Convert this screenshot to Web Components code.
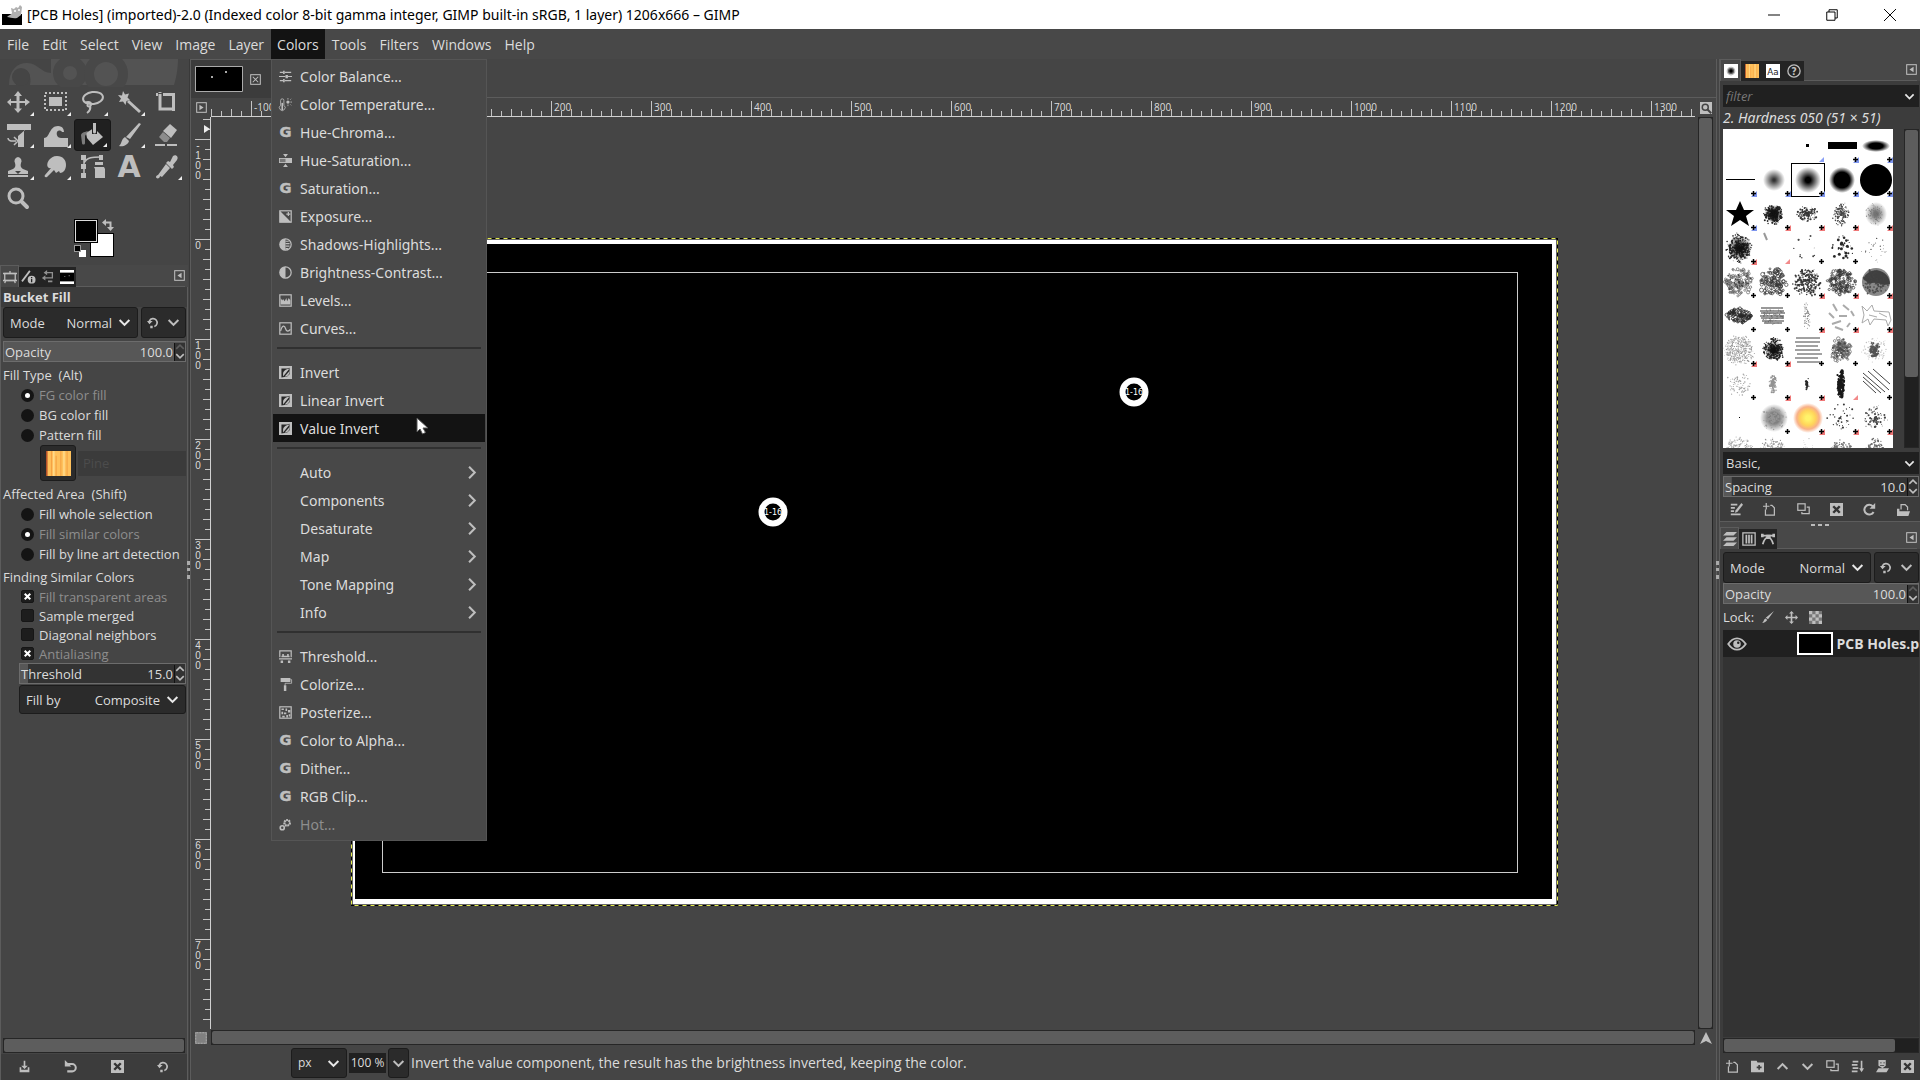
<!DOCTYPE html>
<html lang="en">
<head>
<meta charset="utf-8">
<title>[PCB Holes] (imported)-2.0 – GIMP</title>
<style>
  :root {
    --bg: #454545;
    --bar: #484848;
    --panel: #3c3c3c;
    --field: #2b2b2b;
    --dark: #202020;
    --line: #5c5c5c;
    --fg: #dcdcdc;
    --dim: #8e8e8e;
    --icon: #bebebe;
  }
  html, body { height: 100%; }
  body {
    margin: 0;
    overflow: hidden;
    background: var(--bg);
    color: var(--fg);
    font: 13px/20px "Open Sans", "Noto Sans", sans-serif;
  }
</style>
</head>
<body>
<gimp-window></gimp-window>

<script>
(function () {
  "use strict";

  const base = `
    *, *::before, *::after { box-sizing: border-box; }
    button, input, select {
      appearance: none; margin: 0; padding: 0; border: 0; border-radius: 0;
      background: none; color: inherit; font: inherit; outline: none; min-width: 0;
    }
    button { display: flex; align-items: center; justify-content: center; }
  `;

  /**
   * Registers an element whose shadow root is cloned from a template.
   * @param {string} name
   * @param {string} html
   * @param {(root: ShadowRoot, host: HTMLElement) => void} [setup]
   */
  function define(name, html, setup) {
    const template = document.createElement("template");
    template.innerHTML = `<style>${base}</style>${html}`;
    customElements.define(name, class extends HTMLElement {
      connectedCallback() {
        if (this.shadowRoot) return;
        this.attachShadow({ mode: "open" }).appendChild(template.content.cloneNode(true));
        if (setup) setup(this.shadowRoot, this);
      }
    });
  }

  // ---------- icons ----------

  const box = `<rect x="1" y="1" width="14" height="14" fill="none" stroke="currentColor" stroke-width="1.5"/>`;
  const gegl = `<text x="8" y="14" text-anchor="middle" font-family="DejaVu Sans" font-weight="bold" font-size="18" stroke="currentColor" stroke-width=".6" fill="currentColor">G</text>`;
  const invert = `<path fill="currentColor" d="M0 0h16v16H0z"/><path fill="#262626" d="M3 3h7l3-1v8l-3 3-7 1z"/><path fill="currentColor" d="M5 10c0-4 3-6 8-7l-8 10zM7 13c4 0 6-3 6-7z"/>`;

  // [viewBox size, markup]
  const icons = {
    move: [24, `<path fill="currentColor" d="M11 0l4 5h-2.500v5H18V7.500L23 11l-5 4v-3h-5.500v5.500H15L11 22l-4-4.500h2.500V12H4v3l-4-4 4-3.500V10h5.500V5H7z"/>`],
    rect: [24, `<rect x="1" y="2" width="21" height="17" fill="none" stroke="currentColor" stroke-width="2" stroke-dasharray="2 2"/><rect x="5" y="6" width="13" height="9" fill="currentColor"/>`],
    lasso: [24, `<ellipse cx="12" cy="7" rx="10" ry="6" fill="none" stroke="currentColor" stroke-width="2" transform="rotate(-8 12 7)"/><path fill="none" stroke="currentColor" stroke-width="2" d="M4 12c3-2 7-1 6 2s-5 1-3-1M9 14c1 4 0 6-3 8"/>`],
    wand: [24, `<path fill="currentColor" d="M5 0l2 3.500 4-1-1.500 4L12 9l-3.500 1-1 4L5 10.500 1 11l2-3.500L0 4l4 .5z"/><path stroke="currentColor" stroke-width="3" d="M10 10l12 11"/>`],
    crop: [24, `<path fill="none" stroke="currentColor" stroke-width="3" d="M5 3v15h12M8 3.500h10.500V20M1 3.500h2M5 1v1"/>`],
    transform: [24, `<path fill="currentColor" d="M0 1h24v6h-7v17h-6V13l7-6H0z"/><path fill="none" stroke="currentColor" stroke-width="1.500" d="M1 15c0 4 5 3 8 3M7 14l4 4-4 4"/>`],
    warp: [24, `<path fill="currentColor" d="M0 15c6 0 5-12 14-12 5 0 6 4 6 6h-2c-1-2-4-2-5 0-1 3 1 6 4 6h7v9H0z"/>`],
    bucket: [24, `<path fill="currentColor" d="M5 10l8-5 9 9-10 8-6-7z"/><path fill="#202020" d="M11 0h5v11h-5z"/><path fill="currentColor" d="M12 0h3v9a1.500 1.500 0 0 1-3 0z"/><path fill="#7c7c7c" d="M0 12c1-3 4-3 7-4l-3 5v7c0 2-3 2-3 0z"/>`],
    brush: [24, `<path fill="currentColor" d="M21 0l2 1-11 15-4-2zM7 14l4 4c-1 4-6 6-10 5 3-2 2-7 6-9z"/>`],
    eraser: [24, `<path fill="currentColor" d="M15 1l7 6-6 8-8-7z"/><path fill="#8c8c8c" d="M8 9l7 6-3 4H9l-5-5z"/><path fill="currentColor" d="M0 21h10v2H0zM12 21h10v2H12z"/>`],
    clone: [24, `<path fill="currentColor" d="M11 2a4 4 0 0 1 3 6c-1 3 0 5 2 6l5 2v3H1v-3l5-2c2-1 3-3 2-6a4 4 0 0 1 3-6zM1 20h20v2H1z"/><path fill="#454545" d="M8 16h6l-3 3z"/>`],
    smudge: [24, `<path fill="currentColor" d="M13 1c6 0 9 4 9 9s-3 8-6 8l-1-2-3 2-2-3-7 7c-2 1-3-1-2-2l6-7c-4 1-5-4-2-8 2-2 4-4 8-4z"/>`],
    path: [24, `<path fill="none" stroke="currentColor" stroke-width="1.500" d="M3 2v20M3 8C6 2 12 2 20 2"/><path fill="currentColor" d="M0 0h5v5H0zM0 9h5v5H0zM0 18h5v5H0zM18 0h4v5h-4zM14 7h8v3h-8zM13 12h10l1 2v9H14v-9z"/>`],
    text: [24, `<text x="11" y="22" text-anchor="middle" font-family="DejaVu Sans" font-weight="bold" font-size="30" fill="currentColor">A</text>`],
    picker: [24, `<path fill="currentColor" d="M18 1c3-2 6 1 4 4l-4 5 1 2-2 2-6-6 2-2 2 1zM11 9l4 4-8 9-2-1c0 3-4 3-4 1 0-1 1-2 2-2z"/>`],
    zoom: [24, `<circle cx="9" cy="9" r="7" fill="none" stroke="currentColor" stroke-width="3"/><path stroke="currentColor" stroke-width="4" stroke-linecap="round" d="M15 15l5 5"/>`],

    balance: [16, `<path stroke="currentColor" stroke-width="1.500" d="M1 3h4M7 3h8M0 8h8M11 8h5M1 13h4M7 13h8"/><path fill="currentColor" d="M5 1h2v4H5zM8 6h3v4H8zM5 11h2v4H5z"/>`],
    temperature: [16, `<path fill="none" stroke="currentColor" d="M2 9V3a2 2 0 0 1 4 0v6a3.500 3.500 0 1 1-4 0z"/><path fill="currentColor" d="M3 6h2v9H3z"/><circle cx="11" cy="5" r="2" fill="currentColor"/><path stroke="currentColor" d="M11 0v2M11 8v2M14 2l1-1M14 8l1 1M14 5h2"/>`],
    gegl: [16, gegl],
    huesat: [16, `<path fill="currentColor" d="M5 0h6L8 4zM0 5h16v6H0zM5 16h6l-3-4z"/><path fill="#777" d="M1 6h7v4H1z"/>`],
    exposure: [16, `${box}<path fill="currentColor" d="M1 1l14 14H1z"/><path stroke="currentColor" stroke-width="1.500" d="M9 5h5M11.500 2.500v5"/>`],
    shadows: [16, `<circle cx="8" cy="8" r="7" fill="none" stroke="currentColor" stroke-width="1.500"/><path fill="currentColor" d="M8 1a7 7 0 0 0 0 14z"/><path stroke="currentColor" stroke-width="1.500" d="M8 4h4M8 7h5M8 10h5M8 13h3"/>`],
    contrast: [16, `<circle cx="8" cy="8" r="7" fill="none" stroke="currentColor" stroke-width="1.500"/><path fill="currentColor" d="M8 1a7 7 0 0 0 0 14z"/>`],
    levels: [16, `${box}<path fill="currentColor" d="M2 13V5l2 3 1-2 2 3 2-4 1 4 2-4 2 3v5z"/>`],
    curves: [16, `${box}<path fill="none" stroke="currentColor" stroke-width="1.500" d="M2 11c2-8 5-7 6-3s4 4 6 1"/>`],
    invert: [16, invert],
    threshold: [16, `<path fill="none" stroke="currentColor" stroke-width="1.500" d="M1 9V1h14v8M0 11h16"/><path fill="currentColor" d="M3 7h10v2H3zM4 5h2v2H4zM10 5h2v2h-2zM2 13h3v3H2zM11 13h3v3h-3z"/>`],
    colorize: [16, `<path fill="currentColor" d="M2 0h12v5H2zM6 9h3v7H6z"/><path fill="none" stroke="currentColor" d="M14 2h1.500v4.500h-8V9"/>`],
    posterize: [16, `${box}<path fill="currentColor" d="M3 3h3v2H3zM8 3h2v3H8zM11 5h3v3h-3zM3 7h2v3H3zM6 8h3v2H6zM9 11h2v3H9zM12 10h2v3h-2zM4 12h3v2H4z"/>`],
    gears: [16, `<circle cx="10" cy="6" r="3.500" fill="none" stroke="currentColor" stroke-width="2.500" stroke-dasharray="2 1"/><circle cx="10" cy="6" r="3" fill="none" stroke="currentColor"/><circle cx="4" cy="12" r="2.500" fill="none" stroke="currentColor" stroke-width="2"/>`],

    down: [16, `<path fill="none" stroke="currentColor" stroke-width="2.500" d="M2 5l6 6 6-6"/>`],
    up: [16, `<path fill="none" stroke="currentColor" stroke-width="2.500" d="M2 11l6-6 6 6"/>`],
    right: [16, `<path fill="none" stroke="currentColor" stroke-width="2.500" d="M5 1l7 7-7 7"/>`],
    tabmenu: [16, `${box}<path fill="currentColor" d="M11 4v8L5 8z"/>`],
    cornermenu: [16, `${box}<path fill="currentColor" d="M5 4v8l6-4z"/>`],
    tabclose: [16, `${box}<path stroke="currentColor" stroke-width="1.500" d="M4 4l8 8M12 4l-8 8"/>`],
    quickzoom: [16, `<path fill="currentColor" d="M0 0h16v16H0z"/><circle cx="7" cy="7" r="4" fill="none" stroke="#444" stroke-width="2"/><path stroke="#444" stroke-width="2.500" d="M10 10l5 5"/>`],
    quickmask: [16, `<path fill="#808080" d="M0 0h16v16H0z"/><rect x="1" y="1" width="14" height="14" fill="none" stroke="#ccc" stroke-dasharray="1 1"/>`],
    nav: [16, `<path fill="currentColor" d="M8 0l8 16-8-4-8 4z"/>`],
    reset: [16, `<path fill="none" stroke="currentColor" stroke-width="2" d="M3 8V6a5 5 0 1 1 6 7"/><path fill="currentColor" d="M0 6h7l-4 4zM4 12h3v3H4z"/>`],
    resetleft: [16, `<path fill="none" stroke="currentColor" stroke-width="2.500" d="M3 5h7a4.500 4.500 0 0 1 0 9H4"/><path fill="currentColor" d="M1 0v8h8z"/>`],
    options: [16, `<rect x="2" y="4" width="12" height="8" fill="none" stroke="currentColor" stroke-width="1.500"/><path stroke="currentColor" stroke-width="1.500" d="M8 1v3M3 12l-1 3M13 12l1 3M0 4h16M0 12h16"/>`],
    device: [16, `<path stroke="currentColor" stroke-width="2" d="M0 13L9 1"/><circle cx="11" cy="11" r="4.500" fill="currentColor"/><path stroke="#222" stroke-width="1.500" d="M11 8v1M11 10v4"/>`],
    undo: [16, `<g opacity=".7"><path fill="none" stroke="currentColor" stroke-width="1.500" d="M6 3h7v6H4"/><path fill="currentColor" d="M7 0v6L3 3zM5 6v6L1 9zM8 12h5v2H8z"/></g>`],
    help: [16, `<circle cx="8" cy="8" r="7" fill="none" stroke="currentColor" stroke-width="1.500"/><text x="8" y="12" text-anchor="middle" font-family="DejaVu Sans" font-weight="bold" font-size="11" fill="currentColor">?</text>`],
    save: [16, `<path fill="currentColor" d="M7 1h2v6h3l-4 4-4-4h3zM2 9h2v3h8V9h2v6H2z"/>`],
    delete: [16, `<path fill="currentColor" d="M0 0h16v16H0z"/><path stroke="#333" stroke-width="3" d="M4 4l8 8M12 4l-8 8"/>`],
    edit: [16, `<path stroke="currentColor" stroke-width="2" d="M1 2h8M1 6h5M1 10h4M1 14h12"/><path fill="currentColor" d="M14 0l2 2-7 9-3 1 1-3z"/>`],
    new: [16, `<path fill="none" stroke="currentColor" stroke-width="1.500" d="M3 8v7h11V6l-3-3H9M0 4h8M4 0v8"/>`],
    copy: [16, `<rect x="1" y="1" width="9" height="8" fill="none" stroke="currentColor" stroke-width="1.500"/><path fill="none" stroke="currentColor" stroke-width="1.500" d="M12 5h3v8H6v-2"/>`],
    refresh: [16, `<path fill="none" stroke="currentColor" stroke-width="2.500" d="M13 11a6 6 0 1 1-1-7"/><path fill="currentColor" d="M15 0v7H8z"/>`],
    open: [16, `<path fill="currentColor" d="M0 7h3v3h13l-2 6H0z"/><path fill="none" stroke="currentColor" stroke-width="1.500" d="M5 8V2h5l3 3v4"/>`],
    folder: [16, `<path fill="currentColor" fill-rule="evenodd" d="M0 1h7l1 2h8v12H0zM9 6v2H7v2h2v2h2v-2h2V8h-2V6z"/>`],
    merge: [16, `<path stroke="currentColor" stroke-width="2" d="M2 2h7M1 6h7M2 10h7M1 14h7M13 1v12"/><path fill="currentColor" d="M10 10h6l-3 5z"/>`],
    mask: [16, `<path fill="currentColor" d="M3 0h9v7l-4 3-5-3zM0 15l3-5h13l-3 5z"/><path fill="#3c3c3c" d="M5 3h2v1H5zM9 3h2v1H9zM5 6h5v1H5z"/>`],
    layers: [16, `<path fill="currentColor" d="M4 0h12l-4 4H0zM4 6h12l-4 4H0zM4 12h12l-4 4H0z"/>`],
    channels: [16, `${box}<path stroke="currentColor" stroke-width="2" d="M5 3v10M8 3v10M11 3v10"/>`],
    paths: [16, `<path fill="none" stroke="currentColor" stroke-width="2" d="M1 4h14M2 14c2-7 4-8 6-8s4 1 6 8"/><path fill="currentColor" d="M6 3h5v5H6zM0 2h3v4H0zM13 2h3v4h-3z"/>`],
    lockbrush: [16, `<path fill="currentColor" d="M16 0L8 11l-3-2zM5 10l2 2c-1 2-4 4-7 4 3-2 2-5 5-6z"/>`],
    lockmove: [16, `<path fill="currentColor" d="M8 0l3 3H9v4h4V5l3 3-3 3V9H9v4h2l-3 3-3-3h2V9H3v2L0 8l3-3v2h4V3H5z"/>`],
    lockalpha: [16, `<path fill="#777" d="M0 0h16v16H0z"/><path fill="currentColor" d="M0 0h4v4H0zM8 0h4v4H8zM4 4h4v4H4zM12 4h4v4h-4zM0 8h4v4H0zM8 8h4v4H8zM4 12h4v4H4zM12 12h4v4h-4z"/>`],
    eye: [16, `<path fill="none" stroke="currentColor" stroke-width="1.500" d="M1 8c4-6 10-6 14 0-4 6-10 6-14 0z"/><circle cx="8" cy="8" r="3" fill="currentColor"/><circle cx="9" cy="7" r="1" fill="#222"/>`],
    minimize: [16, `<path stroke="currentColor" stroke-width="1.300" d="M0 8h16"/>`],
    restore: [16, `<path fill="none" stroke="currentColor" stroke-width="1.300" d="M1 4h11v11H1zM4 4V1h11v11h-3"/>`],
    close: [16, `<path stroke="currentColor" stroke-width="1.300" d="M0 0l16 16M16 0L0 16"/>`],
    brushthumb: [16, `<path fill="#fff" d="M0 0h16v16H0z"/><circle cx="8" cy="8" r="5" fill="#bbb"/><circle cx="8" cy="8" r="3.500" fill="#555"/><circle cx="8" cy="8" r="2" fill="#000"/>`],
    pine: [16, `<path fill="#ffc15c" d="M0 0h16v16H0z"/><path fill="#b5522a" d="M0 0h1v16H0z"/><path stroke="#f0963c" d="M3.500 0v16M6.500 3v13M9.500 0v16M13.500 0v16" stroke-width=".7" opacity=".7"/><path stroke="#ffd98a" d="M5 0v16M11.500 0v16"/>`],
    fontthumb: [16, `<path fill="#fff" d="M0 0h16v16H0z"/><text x="8" y="12" text-anchor="middle" font-family="DejaVu Sans" font-size="10" fill="#222">Aa</text>`],
    imagethumb: [16, `<path fill="#fff" d="M0 0h16v16H0z"/><path fill="#000" d="M0 3h16v10H0z"/><path fill="#aaa" d="M5 7h1v1H5zM10 6h1v1h-1z"/>`]
  };

  define("gimp-icon", `
    <style>
      :host { display: inline-flex; flex: none; color: var(--icon); }
      svg { display: block; overflow: visible; }
    </style>
  `, (root, host) => {
    const [view, body] = icons[host.getAttribute("name")];
    const size = host.getAttribute("size") || 13;
    root.innerHTML += `<svg width="${size}" height="${size}" viewBox="0 0 ${view} ${view}" aria-hidden="true">${body}</svg>`;
  });

  // ---------- title bar ----------

  define("title-bar", `
    <style>
      :host { display: flex; align-items: center; height: 29px; padding: 0 1px 0 2px; background: #fff; color: #000; font-family: "Noto Sans", sans-serif; font-size: 14px; }
      .logo { flex: none; margin-right: 5px; }
      .text { flex: 1; overflow: hidden; white-space: nowrap; }
      button { width: 58px; height: 29px; }
      gimp-icon { color: #000; }
    </style>
    <svg class="logo" width="20" height="20" viewBox="0 0 20 20" aria-hidden="true">
      <path d="M0 9h20v11H0z"/>
      <path fill="#b0b0b0" d="M9 3l3 1 2-2 2 1 2-3 2 2-1 8-4 3c-4 1-7-1-10-1 2-2 4-2 5-4z"/>
      <circle cx="13" cy="6" r="1" fill="#fff"/><circle cx="17" cy="5" r="1" fill="#fff"/>
    </svg>
    <span class="text">[PCB Holes] (imported)-2.0 (Indexed color 8-bit gamma integer, GIMP built-in sRGB, 1 layer) 1206x666 – GIMP</span>
    <button aria-label="Minimize"><gimp-icon name="minimize" size="12"></gimp-icon></button>
    <button aria-label="Restore"><gimp-icon name="restore" size="12"></gimp-icon></button>
    <button aria-label="Close"><gimp-icon name="close" size="12"></gimp-icon></button>
  `);

  // ---------- menus ----------

  define("menu-entry", `
    <style>
      :host { display: block; margin: 0 1px; }
      :host([active]) { background: #131313; }
      button { width: 100%; height: 28px; padding: 0 7px 0 6px; gap: 8px; justify-content: flex-start; }
      .blank { width: 13px; }
      .label { flex: 1; padding-top: 1px; text-align: left; }
      :host([disabled]) button { color: var(--dim); }
    </style>
    <button role="menuitem"><span class="label"><slot></slot></span></button>
  `, (root, host) => {
    const button = root.querySelector("button");
    const icon = host.getAttribute("icon");
    button.insertAdjacentHTML("afterbegin", icon ? `<gimp-icon name="${icon}" size="13"></gimp-icon>` : `<span class="blank"></span>`);
    if (host.hasAttribute("submenu")) {
      button.insertAdjacentHTML("beforeend", `<gimp-icon name="right" size="13"></gimp-icon>`);
    }
    button.disabled = host.hasAttribute("disabled");
  });

  const colorsMenu = [
    ["balance", "Color Balance..."], ["temperature", "Color Temperature..."], ["gegl", "Hue-Chroma..."],
    ["huesat", "Hue-Saturation..."], ["gegl", "Saturation..."], ["exposure", "Exposure..."],
    ["shadows", "Shadows-Highlights..."], ["contrast", "Brightness-Contrast..."], ["levels", "Levels..."],
    ["curves", "Curves..."], null,
    ["invert", "Invert"], ["invert", "Linear Invert"], ["invert", "Value Invert", "active"], null,
    ["", "Auto", "submenu"], ["", "Components", "submenu"], ["", "Desaturate", "submenu"],
    ["", "Map", "submenu"], ["", "Tone Mapping", "submenu"], ["", "Info", "submenu"], null,
    ["threshold", "Threshold..."], ["colorize", "Colorize..."], ["posterize", "Posterize..."],
    ["gegl", "Color to Alpha..."], ["gegl", "Dither..."], ["gegl", "RGB Clip..."], ["gears", "Hot...", "disabled"]
  ];

  define("drop-menu", `
    <style>
      :host { display: block; width: 216px; padding: 2px 0; background: #484848; border: 1px solid #555; font-family: "Noto Sans", sans-serif; }
      hr { height: 2px; margin: 5px 5px 9px; border: 0; background: #303030; }
    </style>
  `, (root) => {
    root.innerHTML += colorsMenu.map((entry) => entry
      ? `<menu-entry icon="${entry[0]}" ${entry[2] || ""}>${entry[1]}</menu-entry>`
      : "<hr>").join("");
  });

  define("menu-bar", `
    <style>
      :host { display: block; background: var(--bar); font-size: 14px; }
      nav { display: flex; gap: 1px; height: 30px; padding-left: 1px; }
      button { padding: 1px 6px 0; height: 30px; }
      .open { position: relative; }
      .open > button { background: #131313; }
      drop-menu { position: absolute; z-index: 5; left: 0; top: 30px; }
      .pointer { position: absolute; z-index: 6; left: 145px; top: 388px; }
    </style>
    <nav role="menubar">
      <button>File</button><button>Edit</button><button>Select</button><button>View</button>
      <button>Image</button><button>Layer</button>
      <div class="open">
        <button>Colors</button>
        <drop-menu role="menu"></drop-menu>
        <svg class="pointer" width="14" height="18" viewBox="0 0 14 18" aria-hidden="true">
          <path fill="#fff" stroke="#555" d="M1 1v14l3-3 2.500 5 3-1.500L7 11h5z"/>
        </svg>
      </div>
      <button>Tools</button><button>Filters</button><button>Windows</button><button>Help</button>
    </nav>
  `);

  // ---------- shared controls ----------

  define("spin-slider", `
    <style>
      :host { display: flex; align-items: center; height: 21px; border: 1px solid #6c6c6c; padding-left: 1px;
        background: linear-gradient(#575757, #575757) 0 0 / var(--fill, 100%) 100% no-repeat #333; }
      label { flex: 1; white-space: nowrap; }
      input { width: 48px; text-align: right; }
      .steps { display: flex; flex-direction: column; width: 11px; margin-left: 1px; background: #333; border-left: 1px solid #111; }
      .steps button { height: 9px; }
      .steps.max button:first-child { opacity: .3; }
    </style>
    <label for="value"></label>
    <input id="value" inputmode="decimal">
    <span class="steps">
      <button aria-label="Increase"><gimp-icon name="up" size="10"></gimp-icon></button>
      <button aria-label="Decrease"><gimp-icon name="down" size="10"></gimp-icon></button>
    </span>
  `, (root, host) => {
    root.querySelector("label").textContent = host.getAttribute("label");
    root.querySelector("input").value = host.getAttribute("value");
    host.style.setProperty("--fill", host.getAttribute("fill") + "%");
    if (host.getAttribute("fill") === "100") root.querySelector(".steps").classList.add("max");
  });

  define("combo-box", `
    <style>
      :host { display: flex; align-items: center; height: 31px; padding: 0 6px; background: var(--field); border: 1px solid #1c1c1c; border-radius: 3px; }
      select { flex: 1; height: 100%; padding-right: 21px; margin-right: -15px; text-align-last: var(--align, right); }
      gimp-icon { pointer-events: none; color: #e8e8e8; }
    </style>
    <label for="choice"></label>
    <select id="choice"><option></option></select>
    <gimp-icon name="down" size="13"></gimp-icon>
  `, (root, host) => {
    root.querySelector("label").textContent = host.getAttribute("label") || "";
    root.querySelector("option").textContent = host.getAttribute("value");
    root.querySelector("select").setAttribute("aria-label", host.getAttribute("label") || "Unit");
  });

  define("mode-row", `
    <style>
      :host { display: flex; gap: 3px; }
      combo-box { flex: 1; }
      button { width: 45px; height: 31px; gap: 7px; background: var(--field); border: 1px solid #1c1c1c; border-radius: 3px; }
    </style>
    <combo-box label="Mode" value="Normal"></combo-box>
    <button aria-label="Switch mode group"><gimp-icon name="reset" size="13"></gimp-icon><gimp-icon name="down" size="13"></gimp-icon></button>
  `);

  define("option-choice", `
    <style>
      :host { display: flex; align-items: center; height: 20px; padding-left: 18px; gap: 5px; }
      input { flex: none; position: relative; width: 13px; height: 13px; background: #141414; }
      input[type=radio] { border-radius: 50%; }
      input[type=checkbox] { border-radius: 2px; background: #1d1d1d; border: 1px solid #161616; }
      input[type=radio]:checked::after { content: ""; position: absolute; inset: 4px; border-radius: 50%; background: #fff; }
      input[type=checkbox]:checked::after {
        content: ""; position: absolute; inset: 2px; background: #fff;
        clip-path: polygon(0 20%, 20% 0, 50% 30%, 80% 0, 100% 20%, 70% 50%, 100% 80%, 80% 100%, 50% 70%, 20% 100%, 0 80%, 30% 50%);
      }
      label { white-space: nowrap; }
      input:checked + label { color: var(--dim); }
    </style>
    <input id="box"><label for="box"><slot></slot></label>
  `, (root, host) => {
    const input = root.querySelector("input");
    input.type = host.getAttribute("type") || "radio";
    input.checked = host.hasAttribute("checked");
    if (input.type === "checkbox") host.style.height = "19px";
  });

  define("dock-tabs", `
    <style>
      :host { display: flex; align-items: flex-end; height: 22px; padding-right: 3px; background: var(--bar); }
      button { width: var(--tab, 19px); height: 20px; background: #242424; }
      button[aria-selected=true] { height: 22px; background: none; border: 1px solid var(--line); border-bottom: 0; }
      .rest { display: flex; flex: 1; align-items: center; justify-content: flex-end; align-self: stretch; border-bottom: 1px solid var(--line); }
      .rest button { width: 11px; background: none; }
    </style>
  `, (root, host) => {
    const tabs = host.getAttribute("icons").split(" ").map((name, i) =>
      `<button role="tab" aria-selected="${i === 0}" aria-label="${name}"><gimp-icon name="${name}" size="14"></gimp-icon></button>`);
    root.innerHTML += `${tabs.join("")}<span class="rest"><button aria-label="Configure tab"><gimp-icon name="tabmenu" size="11"></gimp-icon></button></span>`;
  });

  define("button-strip", `
    <style>
      :host { display: flex; justify-content: space-around; align-items: center; height: 24px; background: var(--panel); }
      :host([foot]) { height: 26px; padding-bottom: 1px; }
      button { width: 20px; height: 20px; }
    </style>
  `, (root, host) => {
    root.innerHTML += host.getAttribute("icons").split(" ").map((name) =>
      `<button aria-label="${name}"><gimp-icon name="${name}" size="13"></gimp-icon></button>`).join("");
  });

  define("scroll-track", `
    <style>
      :host { display: flex; background: #202020; border: 1px solid #262626; height: 15px; }
      :host([vertical]) { flex-direction: column; height: auto; width: 15px; }
      .thumb { flex: none; flex-basis: var(--size, 100%); background: #5d5d5d; border-radius: 2px; }
    </style>
    <div class="thumb"></div>
  `, (root, host) => {
    if (host.hasAttribute("size")) host.style.setProperty("--size", host.getAttribute("size") + "%");
  });

  // ---------- left dock ----------

  define("tool-box", `
    <style>
      :host { display: block; }
      .banner { display: block; height: 28px; }
      .tools { display: grid; grid-template-columns: repeat(5, 37px); grid-auto-rows: 32px; }
      .tools button { position: relative; border-radius: 3px; }
      .tools button.active { background: #202020; border: 1px solid #171717; }
      .tools button.group::after { content: ""; position: absolute; right: 3px; bottom: 3px; width: 4px; height: 4px; background: #eee; clip-path: polygon(100% 0, 100% 100%, 0 100%); }
      .colors { display: block; height: 50px; margin-left: 74px; padding-top: 4px; }
    </style>
    <svg class="banner" width="180" height="28" viewBox="0 0 180 28" aria-hidden="true">
      <path fill="#535353" d="M9 26c0-15 8-22 18-22 11 0 14 10 24 10V0h127c0 10-2 20-4 26H30c3-14-8-22-13-10-1 3-2 6-1 10z"/>
      <g fill="#454545"><circle cx="21" cy="18" r="9"/></g>
      <g fill="#535353" stroke="#484848" stroke-width="10"><circle cx="70" cy="14" r="12"/><circle cx="106" cy="15" r="17"/></g>
    </svg>
    <div class="tools"></div>
    <div class="colors">
      <svg width="42" height="40" viewBox="0 0 42 40" role="img" aria-label="Foreground and background colors">
        <path fill="#000" d="M16 14h24v24H16z"/><path fill="#fff" d="M17 15h22v22H17z"/>
        <path fill="#000" d="M0 0h24v24H0z"/><path fill="#ddd" d="M1 1h22v22H1z"/><path fill="#000" d="M2 2h20v20H2z"/>
        <path fill="#fff" d="M5 31h7v7H5z"/><path fill="#999" d="M0 26h7v7H0z"/><path fill="#000" d="M1 27h5v5H1z"/>
        <path fill="#bebebe" d="M28 3.500L32 0v2.500h5.500V8H40l-3.500 4L33 8h2.500V4.500H32V7z"/>
      </svg>
    </div>
  `, (root) => {
    const tools = ["move+", "rect+", "lasso+", "wand+", "crop", "transform+", "warp+", "bucket+", "brush+", "eraser",
      "clone+", "smudge+", "path", "text", "picker+", "zoom"];
    root.querySelector(".tools").innerHTML = tools.map((tool) => {
      const name = tool.replace("+", "");
      const cls = [tool.endsWith("+") ? "group" : "", name === "bucket" ? "active" : ""].join(" ");
      return `<button class="${cls}" aria-label="${name}"><gimp-icon name="${name}" size="24"></gimp-icon></button>`;
    }).join("");
  });

  define("tool-options", `
    <style>
      :host { display: block; padding: 0 1px 0 2px; overflow: hidden; background: var(--bg); }
      h2 { margin: 0 -1px 0 -2px; padding-left: 2px; font-size: 13px; line-height: 20px; background: var(--panel); }
      h3 { margin: 3px 0 0; font-size: 13px; font-weight: normal; line-height: 20px; white-space: pre; }
      .opacity { margin-top: 3px; }
      .pattern { display: flex; align-items: center; gap: 2px; height: 36px; padding-left: 37px; }
      .pattern button { width: 36px; height: 36px; background: var(--field); border: 1px solid #1c1c1c; border-radius: 3px; }
      .pattern input { flex: 1; height: 25px; padding-left: 5px; background: #3b3b3b; color: #4c4c4c; }
      .indent { margin-left: 16px; }
      combo-box { height: 29px; margin-top: 1px; }
    </style>
    <h2>Bucket Fill</h2>
    <mode-row></mode-row>
    <spin-slider class="opacity" label="Opacity" value="100.0" fill="100"></spin-slider>
    <h3>Fill Type  (Alt)</h3>
    <option-choice checked>FG color fill</option-choice>
    <option-choice>BG color fill</option-choice>
    <option-choice>Pattern fill</option-choice>
    <div class="pattern">
      <button aria-label="Choose pattern"><gimp-icon name="pine" size="25"></gimp-icon></button>
      <input value="Pine" aria-label="Pattern" disabled>
    </div>
    <h3>Affected Area  (Shift)</h3>
    <option-choice>Fill whole selection</option-choice>
    <option-choice checked>Fill similar colors</option-choice>
    <option-choice>Fill by line art detection</option-choice>
    <h3>Finding Similar Colors</h3>
    <option-choice type="checkbox" checked>Fill transparent areas</option-choice>
    <option-choice type="checkbox">Sample merged</option-choice>
    <option-choice type="checkbox">Diagonal neighbors</option-choice>
    <option-choice type="checkbox" checked>Antialiasing</option-choice>
    <spin-slider class="indent" label="Threshold" value="15.0" fill="5"></spin-slider>
    <combo-box class="indent" label="Fill by" value="Composite"></combo-box>
  `);

  define("left-dock", `
    <style>
      :host { display: flex; flex-direction: column; width: 190px; position: relative; padding-right: 1px; border-right: 1px solid #393939; }
      .options { display: flex; flex-direction: column; flex: 1; min-height: 0; border: 1px solid var(--line); border-top: 0; border-bottom: 0; }
      tool-options { flex: 1; }
      scroll-track { margin: 1px 2px; }
      .grip { position: absolute; right: -1px; top: 502px; height: 18px; border-left: 3px dotted #aaa; }
    </style>
    <tool-box></tool-box>
    <dock-tabs icons="options device undo imagethumb"></dock-tabs>
    <div class="options">
      <tool-options></tool-options>
      <scroll-track></scroll-track>
      <button-strip foot icons="save resetleft delete reset"></button-strip>
    </div>
    <span class="grip"></span>
  `);

  // ---------- image window ----------

  define("image-ruler", `
    <style>
      :host { display: block; overflow: hidden; font-size: 10px; line-height: 10px; border-bottom: 1px solid #d0d0d0; }
      .marks { display: flex; height: 100%; align-items: flex-end; margin-left: -60px; }
      .mark {
        flex: none; width: 100px; height: 15px; padding: 1px 0 0 3px;
        background:
          linear-gradient(#c4c4c4, #c4c4c4) 0 0 / 1px 100% no-repeat,
          repeating-linear-gradient(90deg, #c4c4c4 0 1px, transparent 1px 20px) 0 100% / 100% 7px no-repeat,
          repeating-linear-gradient(90deg, #c4c4c4 0 1px, transparent 1px 10px) 0 100% / 100% 5px no-repeat;
      }
      :host([vertical]) { position: relative; border-bottom: 0; border-right: 1px solid #d0d0d0; font-family: "Liberation Sans", sans-serif; }
      :host([vertical]) .marks { flex-direction: column; height: auto; margin: -78px 0 0; }
      :host([vertical]) .mark {
        width: 15px; height: 100px; padding: 2px 0 0;
        background:
          linear-gradient(#c4c4c4, #c4c4c4) 0 0 / 100% 1px no-repeat,
          repeating-linear-gradient(180deg, #c4c4c4 0 1px, transparent 1px 20px) 100% 0 / 7px 100% no-repeat,
          repeating-linear-gradient(180deg, #c4c4c4 0 1px, transparent 1px 10px) 100% 0 / 5px 100% no-repeat;
      }
      :host([vertical]) .mark span { display: block; width: 6px; text-align: center; }
      .here { position: absolute; right: 0; top: 8px; width: 6px; height: 8px; background: #eee; clip-path: polygon(0 0, 100% 50%, 0 100%); }
    </style>
    <div class="marks"></div>
  `, (root, host) => {
    const vertical = host.hasAttribute("vertical");
    const last = vertical ? 700 : 1300;
    // the first step lies before the view, so only its ticks are needed
    let html = `<div class="mark"></div>`;
    for (let v = -100; v <= last; v += 100) {
      const text = String(v);
      html += `<div class="mark">${vertical ? [...text].map((c) => `<span>${c}</span>`).join("") : text}</div>`;
    }
    root.querySelector(".marks").innerHTML = html;
    if (vertical) root.innerHTML += `<i class="here"></i>`;
  });

  define("canvas-view", `
    <style>
      :host { display: block; position: relative; overflow: hidden; background: var(--bg); }
      svg { position: absolute; left: 140px; top: 121px; }
      text { font: 8px "DejaVu Sans", sans-serif; fill: #fff; text-anchor: middle; }
    </style>
    <svg width="1207" height="668" viewBox="0 0 1207 668">
      <defs>
        <clipPath id="h1"><circle cx="422" cy="274" r="10"/></clipPath>
        <clipPath id="h2"><circle cx="783" cy="154" r="10"/></clipPath>
      </defs>
      <path fill="#fff" d="M0 0h1207v668H0z"/>
      <path d="M4 6h1197v655H4z"/>
      <rect x="31.500" y="34.500" width="1135" height="600" fill="none" stroke="#ccc"/>
      <circle cx="422" cy="274" r="11.500" fill="#000" stroke="#fff" stroke-width="6"/>
      <circle cx="783" cy="154" r="11.500" fill="#000" stroke="#fff" stroke-width="6"/>
      <text x="422" y="277" clip-path="url(#h1)">1-16</text>
      <text x="783" y="157" clip-path="url(#h2)">1-16</text>
      <rect x=".8" y=".8" width="1205.400" height="666.400" fill="none" stroke="#000" stroke-width="1.600"/>
      <rect x=".5" y=".5" width="1206" height="667" fill="none" stroke="#e6ec50" stroke-dasharray="4 4"/>
    </svg>
  `);

  define("status-bar", `
    <style>
      :host { display: flex; align-items: center; height: 34px; padding-left: 100px; gap: 2px; font-size: 14px; }
      combo-box { --align: left; width: 56px; height: 30px; font-size: 12px; }
      input { width: 37px; height: 20px; background: var(--dark); font-size: 12px; text-align: center; }
      button { width: 21px; height: 30px; background: var(--field); border: 1px solid #1c1c1c; border-radius: 3px; }
      output { white-space: nowrap; }
    </style>
    <combo-box value="px"></combo-box>
    <input value="100 %" aria-label="Zoom">
    <button aria-label="Zoom levels"><gimp-icon name="down" size="13"></gimp-icon></button>
    <output>Invert the value component, the result has the brightness inverted, keeping the color.</output>
  `);

  define("image-window", `
    <style>
      :host { display: flex; flex-direction: column; min-width: 0; border-left: 1px solid var(--line); border-right: 1px solid var(--line); }
      .tabs { display: flex; height: 39px; }
      .tab { display: flex; align-items: center; gap: 7px; width: 90px; padding-left: 4px; background: var(--panel); border-top: 1px solid var(--line); }
      .tabs .rest { flex: 1; border-bottom: 1px solid var(--line); }
      .work { display: grid; flex: 1; min-height: 0; grid-template: 19px 1fr 17px / 20px 1fr 21px; }
      .work > button { align-self: center; justify-self: center; width: 13px; height: 13px; }
      .v { padding-left: 4px; }
      scroll-track { margin: 1px 0; }
      scroll-track[vertical] { margin: 0 3px; }
    </style>
    <div class="tabs">
      <div class="tab">
        <svg width="48" height="26" viewBox="0 0 48 26" role="img" aria-label="PCB Holes">
          <path d="M.5.5h47v25H.5z" fill="#000" stroke="#aaa"/>
          <path fill="#aaa" d="M16 10h2v2h-2zM30 5h2v2h-2z"/>
        </svg>
        <button aria-label="Close image"><gimp-icon name="tabclose" size="11"></gimp-icon></button>
      </div>
      <span class="rest"></span>
    </div>
    <div class="work">
      <button aria-label="Image menu"><gimp-icon name="cornermenu" size="11"></gimp-icon></button>
      <image-ruler></image-ruler>
      <button aria-label="Zoom with window"><gimp-icon name="quickzoom" size="12"></gimp-icon></button>
      <image-ruler vertical class="v"></image-ruler>
      <canvas-view></canvas-view>
      <scroll-track vertical></scroll-track>
      <button aria-label="Quick mask"><gimp-icon name="quickmask" size="12"></gimp-icon></button>
      <scroll-track></scroll-track>
      <button aria-label="Navigate"><gimp-icon name="nav" size="12"></gimp-icon></button>
    </div>
    <status-bar></status-bar>
  `);

  // ---------- right dock ----------

  // small seeded generator, so every load paints the same brushes
  function random(seed) {
    let s = seed * 7919 + 13;
    return () => (s = (s * 16807) % 2147483647) / 2147483647;
  }

  /** Scatter of dots inside an ellipse, denser towards the middle. */
  function splat(seed, count, rx, ry, size, color = "#000", power = 1) {
    const rnd = random(seed);
    let out = "";
    for (let i = 0; i < count; i++) {
      const a = rnd() * Math.PI * 2;
      const d = Math.pow(rnd(), power) * (0.75 + rnd() * 0.35);
      const x = 16 + Math.cos(a) * d * rx;
      const y = 17 + Math.sin(a) * d * ry;
      out += `<circle cx="${x.toFixed(1)}" cy="${y.toFixed(1)}" r="${(0.3 + rnd() * size * 0.8).toFixed(1)}"/>`;
    }
    return `<g fill="${color}" opacity=".9">${out}</g>`;
  }

  /** Little open rings packed in an ellipse. */
  function cells(seed, count, rx, ry, size, color = "#222") {
    return splat(seed, count, rx, ry, size, "none", 0.5).replace("<g ", `<g stroke="${color}" stroke-width=".7" `);
  }

  function soft(id, rx, ry, stop, alpha = 1) {
    return `<radialGradient id="${id}"><stop offset="${stop}" stop-opacity="${alpha}"/><stop offset="1" stop-opacity="0"/></radialGradient>
      <ellipse cx="17" cy="17" rx="${rx}" ry="${ry}" fill="url(#${id})"/>`;
  }

  const dashes = (d, w = 1, c = "#333") => `<path fill="none" stroke="${c}" stroke-width="${w}" d="${d}"/>`;

  // [drawing, corner mark]: b/r = plus on blue/red, p = plus, tb/tr = triangle only
  const brushes = [
    ["", ""], ["", ""], [`<path d="M15 15h3v3h-3z"/>`, "tb"], [`<path d="M3 13h29v7H3z"/>`, "b"], [soft("b1", 14, 6, 0.5), "b"],
    [`<path d="M3 16h29v1H3z"/>`, "b"], [soft("b2", 11, 11, 0.1, 0.8), "b"], [soft("b3", 13, 13, 0.2), "b"], [soft("b4", 13, 13, 0.6), "b"], [`<circle cx="17" cy="17" r="16"/>`, "b"],
    [`<path d="M17 4l4 9h10l-8 6 3 10-9-6-9 6 3-10-8-6h10z"/>`, "b"], [soft("b7", 9, 9, 0.4, 0.8) + splat(3, 260, 10, 10, 1.1, "#111"), "r"], [splat(4, 130, 11, 8, 1, "#222", 0.8), "r"], [splat(5, 150, 8, 12, 0.8, "#333", 0.8), "r"], [soft("b5", 11, 12, 0.1, 0.6) + splat(6, 140, 10, 11, 0.4, "#777"), "r"],
    [soft("b8", 12, 13, 0.2, 0.8) + splat(7, 380, 13, 14, 0.9, "#111", 0.9), "r"], [dashes("M7 2l3 7", 2, "#999"), "tr"], [splat(8, 10, 13, 14, 1.2, "#333", 0.5), "p"], [splat(9, 34, 14, 14, 1.6, "#111", 0.7), "p"], [splat(10, 26, 14, 14, 0.4, "#222", 0.5), ""],
    [cells(11, 130, 14, 14, 1.6, "#555") + splat(2, 60, 13, 13, 0.8, "#333"), "p"], [cells(12, 120, 14, 14, 2.2, "#222"), "p"], [splat(13, 260, 14, 14, 1, "#222", 0.7), "r"], [cells(14, 170, 14, 14, 1.5, "#222"), "r"], [`<circle cx="17" cy="17" r="14" fill="#888"/><path fill="#222" opacity=".7" d="M4 14a14 14 0 0 1 27 5c-8 3-14-4-20 0z"/>` + splat(15, 160, 13, 13, 0.9, "#444", 0.6), "r"],
    [cells(16, 130, 13, 8, 1.6, "#111"), "p"], [dashes("M4 9h22M3 12h24M4 14h24M3 17h24M4 19h23M5 22h22M7 24h18", 2, "#999") + splat(17, 90, 12, 8, 0.5, "#666", 0.6), "p"], [splat(18, 50, 4, 15, 0.6, "#777", 0.6), "r"], [dashes("M8 5l4 7M18 6l6 5M4 14l5 5M14 17h8M26 12l3 5M7 25l9-3M10 28l8 3M25 24l-3 4", 2, "#aaa"), "r"], [dashes("M3 7l5 5 5-6 2 6 15 1 2 8-3 6-2-6-12-1-4 6-2-6-6 4 2-8zM10 16l8 2M20 14l8 4", 1, "#aaa"), "r"],
    [splat(19, 460, 15, 15, 0.4, "#888", 0.5), "r"], [soft("b9", 9, 9, 0.2, 0.9) + splat(20, 280, 11, 12, 1, "#111", 0.9), "r"], [dashes("M5 5h24M4 9h25M5 13h22M4 17h25M6 21h25M4 25h23M6 29h23", 1, "#444"), "p"], [cells(21, 110, 11, 12, 2, "#555") + splat(22, 50, 10, 10, 1.1, "#444"), "p"], [splat(23, 140, 14, 13, 0.6, "#bbb") + splat(41, 80, 6, 8, 1.4, "#444"), "p"],
    [splat(24, 80, 12, 12, 0.7, "#999", 0.5), "p"], [splat(25, 120, 4, 10, 1, "#888"), "r"], [splat(26, 20, 2, 10, 1.2, "#111"), "r"], [splat(27, 220, 4, 14, 1.4, "#000"), "tr"], [dashes("M4 10l18 16M4 6l22 19M9 4l21 19M14 2l17 15M4 14l13 12", 1, "#444"), "p"],
    [`<path d="M16 16h1v1h-1z"/>`, ""], [soft("b6", 14, 14, 0.4, 0.5) + splat(28, 120, 13, 12, 1, "#999"), "p"],
    [`<radialGradient id="sun"><stop offset=".15" stop-color="#fff36a"/><stop offset=".5" stop-color="#ffd45a"/><stop offset=".75" stop-color="#f8b088"/><stop offset="1" stop-color="#fff"/></radialGradient><circle cx="17" cy="17" r="15" fill="url(#sun)"/>`, "r"],
    [splat(29, 40, 14, 13, 1, "#222", 0.6), "r"], [splat(30, 90, 13, 12, 1, "#333"), "r"],
    [splat(31, 260, 15, 15, 0.6, "#999", 0.5), ""], [splat(32, 260, 14, 14, 0.7, "#888", 0.5), ""], [splat(33, 40, 13, 13, 0.4, "#aaa"), ""], [splat(34, 160, 11, 13, 1, "#666", 0.6), ""], [splat(35, 200, 11, 13, 1, "#555", 0.6), ""]
  ];

  const marks = {
    p: "", "": "",
    b: `<path fill="#7d95ee" d="M34 28v6h-6z"/>`,
    r: `<path fill="#ef7777" d="M34 28v6h-6z"/>`,
    tb: `<path fill="#8aa0f5" d="M33 28v5h-5z"/>`,
    tr: `<path fill="#f28a8a" d="M33 28v5h-5z"/>`
  };

  define("brush-grid", `
    <style>
      :host { display: flex; height: 319px; overflow: hidden; gap: 11px; }
      .list { display: grid; grid-template-columns: repeat(5, 34px); grid-auto-rows: 34px; background: #fff; overflow: hidden; }
      button { width: 34px; height: 34px; }
      button.active { border: 1px solid #000; }
      svg { flex: none; width: 34px; height: 34px; }
    </style>
    <div class="list"></div>
    <scroll-track vertical size="78"></scroll-track>
  `, (root) => {
    root.querySelector(".list").innerHTML = brushes.map(([art, mark], i) => {
      const plus = "prb".includes(mark) && mark ? `<path stroke="#000" stroke-width="1.500" d="M28 30.500h5M30.500 28v5"/>` : "";
      return `<button class="${i === 7 ? "active" : ""}" aria-label="Brush ${i + 1}"><svg viewBox="0 0 34 34">${art}${marks[mark]}${plus}</svg></button>`;
    }).join("");
  });

  define("combo-entry", `
    <style>
      :host { display: flex; align-items: center; height: 22px; padding: 0 4px 0 3px; background: var(--dark); }
      input { flex: 1; }
      input::placeholder { color: #777; font-style: italic; opacity: 1; }
      gimp-icon { color: #e8e8e8; }
    </style>
    <input>
    <button aria-label="Show list"><gimp-icon name="down" size="11"></gimp-icon></button>
  `, (root, host) => {
    const input = root.querySelector("input");
    input.placeholder = host.getAttribute("placeholder") || "";
    input.value = host.getAttribute("value") || "";
    input.setAttribute("aria-label", host.getAttribute("label"));
  });

  define("layer-row", `
    <style>
      :host { display: flex; align-items: center; height: 27px; padding-left: 5px; background: var(--dark); font-size: 14px; font-weight: bold; white-space: nowrap; overflow: hidden; }
      .thumb { flex: none; width: 36px; height: 23px; margin: 0 4px 0 51px; background: #000; border: 2px solid #fff; }
    </style>
    <button aria-label="Toggle visibility"><gimp-icon name="eye" size="20"></gimp-icon></button>
    <span class="thumb"></span><span><slot></slot></span>
  `);

  define("right-dock", `
    <style>
      :host { display: flex; flex-direction: column; width: 201px; margin-left: 2px; position: relative; border-left: 1px solid var(--line); background: var(--panel); }
      .brushes { padding: 4px 1px 0 3px; }
      .name { display: block; height: 22px; line-height: 22px; font-family: "Noto Sans", sans-serif; font-size: 14px; font-style: italic; white-space: nowrap; }
      .brushes > * + spin-slider { margin-top: 2px; }
      .tag { margin-top: 4px; }
      .split { display: flex; justify-content: center; align-items: center; height: 6px; border-top: 1px solid var(--line); background: var(--bar); }
      .split i { width: 18px; height: 2px; background: repeating-linear-gradient(90deg, #bbb 0 4px, transparent 4px 7px); }
      .top { --tab: 21px; }
      .layers { display: flex; flex-direction: column; flex: 1; min-height: 0; padding: 3px 1px 0 3px; }
      .lock { display: flex; align-items: center; gap: 11px; height: 26px; }
      .lock span { margin-right: -3px; }
      .list { flex: 1; background: #333; }
      scroll-track { margin: 1px 0; }
      .grip { position: absolute; left: -4px; top: 502px; height: 18px; border-left: 3px dotted #aaa; }
    </style>
    <dock-tabs class="top" icons="brushthumb pine fontthumb help"></dock-tabs>
    <div class="brushes">
      <combo-entry label="Filter" placeholder="filter"></combo-entry>
      <span class="name">2. Hardness 050 (51 × 51)</span>
      <brush-grid></brush-grid>
      <combo-entry class="tag" label="Tags" value="Basic,"></combo-entry>
      <spin-slider label="Spacing" value="10.0" fill="4"></spin-slider>
    </div>
    <button-strip icons="edit new copy delete refresh open"></button-strip>
    <div class="split"><i></i></div>
    <dock-tabs icons="layers channels paths"></dock-tabs>
    <div class="layers">
      <mode-row></mode-row>
      <spin-slider label="Opacity" value="100.0" fill="100"></spin-slider>
      <div class="lock">
        <span>Lock:</span>
        <button aria-label="Lock pixels"><gimp-icon name="lockbrush" size="12"></gimp-icon></button>
        <button aria-label="Lock position"><gimp-icon name="lockmove" size="13"></gimp-icon></button>
        <button aria-label="Lock alpha"><gimp-icon name="lockalpha" size="13"></gimp-icon></button>
      </div>
      <div class="list"><layer-row>PCB Holes.p</layer-row></div>
      <scroll-track size="88"></scroll-track>
    </div>
    <button-strip foot icons="new folder up down copy merge mask delete"></button-strip>
    <span class="grip"></span>
  `);

  define("gimp-window", `
    <style>
      :host { display: flex; flex-direction: column; height: 100vh; }
      main { display: flex; flex: 1; min-height: 0; }
      image-window { flex: 1; }
      left-dock, right-dock { flex: none; }
    </style>
    <title-bar></title-bar>
    <menu-bar></menu-bar>
    <main>
      <left-dock></left-dock>
      <image-window></image-window>
      <right-dock></right-dock>
    </main>
  `);
})();
</script>
</body>
</html>
